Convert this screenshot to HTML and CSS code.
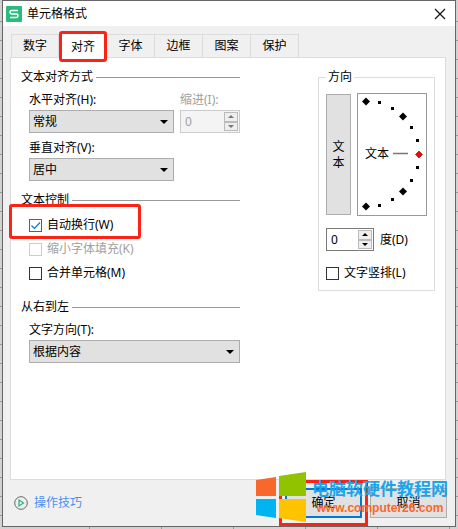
FILE: index.html
```
<!DOCTYPE html>
<html lang="zh-CN">
<head>
  <meta charset="UTF-8">
  <title>单元格格式</title>
  <link rel="stylesheet" href="styles.css">
</head>
<body>
  <div class="dialog">
    <header class="titlebar">
      <svg class="logo" width="16" height="16" viewBox="0 0 16 16">
        <rect width="16" height="16" rx="1" fill="#2abb7f"/>
        <path d="M12 4.500H5.500Q4 4.500 4 6.200T5.500 8H10.500Q12 8 12 9.700T10.500 11.500H4" fill="none" stroke="#fff" stroke-width="1.500"/>
      </svg>
      <h1>单元格格式</h1>
      <button class="close" aria-label="关闭">
        <svg width="12" height="12" viewBox="0 0 12 12"><path d="M1 1L11 11M11 1L1 11" stroke="#111" stroke-width="1.200"/></svg>
      </button>
    </header>

    <nav class="tabs">
      <button class="tab">数字</button>
      <button class="tab active">对齐</button>
      <button class="tab">字体</button>
      <button class="tab">边框</button>
      <button class="tab">图案</button>
      <button class="tab">保护</button>
    </nav>

    <main class="panel">
      <div class="left">
        <section>
          <h2>文本对齐方式</h2>
          <div class="fields">
            <div class="row">
              <div class="field">
                <label for="horizontal">水平对齐(H):</label>
                <select id="horizontal"><option>常规</option></select>
              </div>
              <div class="field disabled">
                <label for="indent">缩进(I):</label>
                <div class="spin">
                  <input type="text" id="indent" value="0" disabled>
                  <div class="arrows">
                    <button disabled aria-label="增加"><svg width="6" height="3" viewBox="0 0 6 3"><path d="M0 3L3 0L6 3Z"/></svg></button>
                    <button disabled aria-label="减少"><svg width="6" height="3" viewBox="0 0 6 3"><path d="M0 0L3 3L6 0Z"/></svg></button>
                  </div>
                </div>
              </div>
            </div>
            <div class="row">
              <div class="field">
                <label for="vertical">垂直对齐(V):</label>
                <select id="vertical"><option>居中</option></select>
              </div>
            </div>
          </div>
        </section>

        <section>
          <h2>文本控制</h2>
          <div class="fields checks">
            <label class="check wrap"><input type="checkbox" checked>自动换行(W)</label>
            <label class="check disabled"><input type="checkbox" disabled>缩小字体填充(K)</label>
            <label class="check"><input type="checkbox">合并单元格(M)</label>
          </div>
        </section>

        <section>
          <h2>从右到左</h2>
          <div class="fields">
            <div class="field wide">
              <label for="direction">文字方向(T):</label>
              <select id="direction"><option>根据内容</option></select>
            </div>
          </div>
        </section>
      </div>

      <fieldset class="orient">
        <legend>方向</legend>
        <div class="dials">
          <button class="vertical">文<br>本</button>
          <div class="dial">
            <span>文本</span>
            <svg width="70" height="123" viewBox="0 0 70 123">
              <path d="M35 59.500H50" stroke="#777" stroke-width="1.500"/>
              <path d="M8 3.500l4 4-4 4-4-4ZM45 18.500l4 4-4 4-4-4ZM45 93.500l4 4-4 4-4-4ZM8 108.500l4 4-4 4-4-4Z"/>
              <path d="M20 7h3v3h-3ZM33 13h3v3h-3ZM52 32h3v3h-3ZM58 45h3v3h-3ZM58 72h3v3h-3ZM52 85h3v3h-3ZM33 104h3v3h-3ZM20 110h3v3h-3Z"/>
              <path d="M61 57l3.500 3.500-3.500 3.500-3.500-3.500Z" fill="#f00" stroke="#300" stroke-width=".5"/>
            </svg>
          </div>
        </div>
        <div class="degree">
          <div class="spin">
            <input type="text" id="degree" value="0">
            <div class="arrows">
              <button aria-label="增加"><svg width="6" height="3" viewBox="0 0 6 3"><path d="M0 3L3 0L6 3Z"/></svg></button>
              <button aria-label="减少"><svg width="6" height="3" viewBox="0 0 6 3"><path d="M0 0L3 3L6 0Z"/></svg></button>
            </div>
          </div>
          <label for="degree">度(D)</label>
        </div>
        <label class="check"><input type="checkbox">文字竖排(L)</label>
      </fieldset>
    </main>

    <footer class="footer">
      <a class="tips" href="#">
        <svg width="14" height="14" viewBox="0 0 14 14" fill="none"><circle cx="7" cy="7" r="6.300" stroke="#666"/><path d="M5 4v6l4.500-3Z" stroke="#1fb57a" stroke-width="1.200"/></svg>
        操作技巧
      </a>
      <button class="btn primary">确定</button>
      <button class="btn">取消</button>
      <div class="watermark">
        <svg width="50" height="50" viewBox="0 0 50 50">
          <path d="M0 8L20 5V24H0Z" fill="#f8682c"/>
          <path d="M23 4L50 0V24H23Z" fill="#91c300"/>
          <path d="M0 27H20V46L0 43Z" fill="#00b4f1"/>
          <path d="M23 27H50V50L23 46Z" fill="#ffc300"/>
        </svg>
        <div class="site">
          <strong>电脑软硬件教程网</strong>
          <span>www.computer26.com</span>
        </div>
      </div>
    </footer>
  </div>
</body>
</html>
```

FILE: styles.css
```
*, *::before, *::after {
  box-sizing: border-box;
}
body {
  margin: 0;
  padding: 0 2px 2px;
  min-height: 100vh;
  display: flex;
  font: 12px/16px "Noto Sans", "Noto Sans CJK SC", sans-serif;
  color: #000;
  background-color: #d2d2d2;
  background-image:
    repeating-linear-gradient(to right, transparent 0 71px, #999 71px 72px),
    repeating-linear-gradient(to bottom, transparent 0 18px, #999 18px 19px);
  background-position: 18px 0, 0 3px;
}
button, input, select {
  font: inherit;
  color: inherit;
  margin: 0;
  padding: 0;
}
.dialog {
  flex: 1;
  display: flex;
  flex-direction: column;
  border: 1px solid #666;
  background-color: #f0f0f0;
}
.titlebar {
  display: flex;
  align-items: center;
  height: 25px;
  padding: 0 9px 0 3px;
  background-color: #fff;
}
h1 {
  flex: 1;
  margin: 0 0 0 5px;
  font-size: 12px;
  font-weight: normal;
}
.close {
  display: flex;
  border: none;
  background: none;
}
.tabs {
  display: flex;
  height: 31px;
  padding: 8px 0 0 8px;
}
.tab {
  width: 48px;
  border: 1px solid #dcdcdc;
  border-width: 1px 1px 0 0;
  background-color: #f0f0f0;
}
.tab:first-child {
  border-left-width: 1px;
}
.tab.active {
  position: relative;
  height: 31px;
  margin-top: -3px;
  border: 3px solid #fb2316;
  border-radius: 3px;
  background-color: #fff;
}
.panel {
  flex: 1;
  display: flex;
  justify-content: space-between;
  align-items: flex-start;
  margin: 0 9px 0 7px;
  padding: 11px 10px 0;
  border: 1px solid #dcdcdc;
  background-color: #fff;
}
.left {
  width: 219px;
}
section {
  margin-bottom: 11px;
}
section + section {
  margin-bottom: 18px;
}
h2 {
  display: flex;
  align-items: center;
  gap: 3px;
  margin: 0;
  font-size: 12px;
  font-weight: normal;
}
h2::after {
  content: "";
  flex: 1;
  height: 1px;
  background-color: #999;
}
.fields {
  display: flex;
  flex-direction: column;
  gap: 7px;
  padding: 7px 0 0 8px;
}
.row {
  display: flex;
  gap: 6px;
}
.field {
  display: flex;
  flex-direction: column;
  gap: 2px;
  width: 145px;
}
.field.disabled {
  width: 60px;
}
.field.wide {
  width: auto;
}
select {
  height: 23px;
  padding: 0 3px;
  border: 1px solid #adadad;
  border-radius: 0;
  appearance: none;
  background: #e1e1e1 url("data:image/svg+xml,%3Csvg xmlns='http://www.w3.org/2000/svg' width='8' height='4'%3E%3Cpath d='M0 0H8L4 4Z'/%3E%3C/svg%3E") no-repeat right 5px center;
}
.spin {
  display: flex;
  height: 23px;
  padding: 1px;
  border: 1px solid #7a7a7a;
  background-color: #fff;
}
.spin input {
  flex: 1;
  min-width: 0;
  padding-left: 3px;
  border: none;
  background: none;
}
.arrows {
  display: flex;
  flex-direction: column;
  width: 14px;
}
.arrows button {
  flex: 1;
  display: flex;
  align-items: center;
  justify-content: center;
  border: 1px solid #bbb;
  background-color: #eee;
}
.disabled {
  color: #a0a0a0;
}
.disabled .spin {
  border-color: #ccc;
  background-color: #f4f4f4;
}
.disabled svg {
  fill: #777;
}
.checks {
  gap: 8px;
  padding-top: 9px;
}
.check {
  display: flex;
  align-items: center;
  gap: 5px;
}
.check input {
  width: 13px;
  height: 13px;
  border: 1px solid #333;
  appearance: none;
  background-color: #fff;
}
.check input:disabled {
  border-color: #ccc;
}
.check input:checked {
  border-color: #0078d7;
  background-image: url("data:image/svg+xml,%3Csvg xmlns='http://www.w3.org/2000/svg' width='11' height='11'%3E%3Cpath d='M1.500 5.500L4.500 8.500L10 2.500' fill='none' stroke='%230078d7' stroke-width='1.200'/%3E%3C/svg%3E");
}
.wrap {
  position: relative;
}
/* red frame over the wrap option */
.wrap::after {
  content: "";
  position: absolute;
  left: -20px;
  top: -13px;
  width: 132px;
  height: 35px;
  border: 3px solid #fb2316;
  border-radius: 3px;
}
.orient {
  width: 117px;
  margin: 0;
  padding: 0 7px 9px;
  border: 1px solid #dcdcdc;
}
legend {
  padding: 0 2px;
}
.dials {
  display: flex;
  align-items: center;
  justify-content: space-between;
  padding-top: 8px;
}
.vertical {
  width: 25px;
  height: 121px;
  border: 1px solid #adadad;
  background-color: #e1e1e1;
}
.dial {
  position: relative;
  width: 70px;
  height: 123px;
  border: 1px solid #999;
}
.dial svg {
  position: absolute;
  left: 0;
  top: 0;
}
.dial span {
  display: block;
  padding: 52px 0 0 7px;
}
.degree {
  display: flex;
  align-items: center;
  gap: 6px;
  margin: 12px 0 14px;
}
.degree .spin {
  width: 48px;
}
.footer {
  position: relative;
  display: flex;
  align-items: center;
  gap: 8px;
  height: 46px;
  padding: 0 8px 0 11px;
}
.tips {
  flex: 1;
  display: flex;
  align-items: center;
  gap: 6px;
  color: #4a90f0;
  text-decoration: none;
}
.btn {
  width: 77px;
  height: 30px;
  border: 1px solid #adadad;
  background-color: #e1e1e1;
}
.primary {
  position: relative;
  border: 2px solid #0078d7;
}
.primary::after {
  content: "";
  position: absolute;
  left: -8px;
  top: -10px;
  width: 89px;
  height: 46px;
  border: 3px solid #fb2316;
}
.watermark {
  position: absolute;
  right: 7px;
  bottom: 4px;
  display: flex;
  gap: 6px;
  pointer-events: none;
}
.site {
  display: flex;
  flex-direction: column;
  align-items: center;
  padding-top: 7px;
}
.site strong {
  font-size: 17px;
  line-height: 20px;
  color: #1aa5ea;
}
.site span {
  font: bold 12px/18px "Liberation Sans", sans-serif;
  color: #f8682c;
}
```
